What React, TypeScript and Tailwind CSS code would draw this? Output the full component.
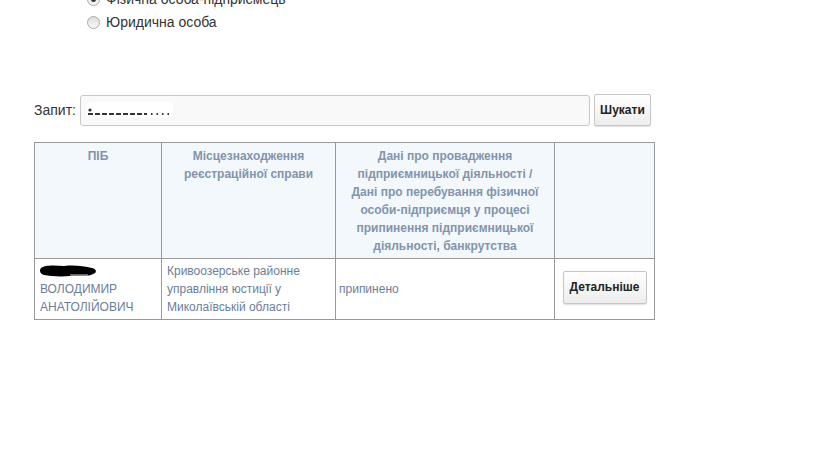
import React from 'react';

const Radio: React.FC<{ checked?: boolean; label: string }> = ({ checked, label }) => (
  <label className="flex h-[23px] items-center gap-[6px]">
    <span className="flex h-[13px] w-[13px] items-center justify-center rounded-full border border-[#a9a9a9] bg-gradient-to-b from-[#dcdcdc] to-[#fafafa]">
      {checked && <span className="h-[5px] w-[5px] rounded-full bg-[#333]" />}
    </span>
    <span className="text-[14px] text-[#333]">{label}</span>
  </label>
);

const headers: React.ReactNode[] = [
  'ПІБ',
  <>
    Місцезнаходження
    <br />
    реєстраційної справи
  </>,
  <>
    Дані про провадження
    <br />
    підприємницької діяльності /
    <br />
    Дані про перебування фізичної
    <br />
    особи-підприємця у процесі
    <br />
    припинення підприємницької
    <br />
    діяльності, банкрутства
  </>,
  '',
];

export default function App() {
  return (
    <div className="h-[460px] w-[816px] overflow-hidden bg-white font-['Liberation_Sans',Arial,sans-serif]">
      <div className="-mt-[12px] pl-[87px]">
        <Radio checked label="Фізична особа-підприємець" />
        <Radio label="Юридична особа" />
      </div>

      <div className="mt-[60px] flex items-center pl-[34px]">
        <span className="mr-[4px] text-[14px] text-[#333]">Запит:</span>
        <div className="flex h-[31px] w-[510px] items-center rounded-[3px] border border-[#c8c8c8] bg-[#f9f9f9] pl-[6px]">
          {/* redacted query value */}
          <svg width="86" height="16" viewBox="0 0 86 16">
            <rect x="0" y="0" width="86" height="16" rx="3" fill="#fff" />
            <circle cx="3" cy="8" r="1.6" fill="#333" />
            <path d="M1 12 H60" stroke="#333" strokeWidth="2" strokeDasharray="5 2" />
            <path d="M64 12 H84" stroke="#333" strokeWidth="2" strokeDasharray="1.5 4" />
          </svg>
        </div>
        <button className="ml-[4px] h-[32px] w-[57px] rounded-[2px] border border-[#c6c6c6] bg-gradient-to-b from-white to-[#ededed] text-[12px] font-bold text-[#222] shadow-[0_1px_1px_rgba(0,0,0,0.12)]">
          Шукати
        </button>
      </div>

      <table className="ml-[34px] mt-[16px] w-[620px] table-fixed border-collapse text-[12px] leading-[18px]">
        <colgroup>
          <col className="w-[127px]" />
          <col className="w-[174px]" />
          <col className="w-[219px]" />
          <col className="w-[100px]" />
        </colgroup>
        <thead>
          <tr className="bg-[#f3f8fd]">
            {headers.map((h, i) => (
              <th
                key={i}
                className="border border-[#999] px-[4px] pb-[3px] pt-[4px] text-center align-top font-bold text-[#8294aa]"
              >
                {h}
              </th>
            ))}
          </tr>
        </thead>
        <tbody>
          <tr className="text-[#6c7d99]">
            <td className="border border-[#999] px-[5px] pb-[3px] pt-[3px] align-middle">
              <svg width="58" height="14" viewBox="0 0 58 14" className="block h-[18px] py-[2px]">
                <path
                  d="M1 4 C4 1 14 1 24 2 C34 1 44 2 52 4 C57 5 57 9 53 10 C48 13 40 11 30 12 C20 13 10 12 4 11 C0 10 -1 6 1 4 Z"
                  fill="#000"
                />
                <path d="M30 11 H48" stroke="#fff" strokeWidth="0.8" />
              </svg>
              <div>ВОЛОДИМИР</div>
              <div>АНАТОЛІЙОВИЧ</div>
            </td>
            <td className="border border-[#999] px-[5px] pb-[3px] pt-[3px] align-middle">
              Кривоозерське районне управління юстиції у Миколаївській області
            </td>
            <td className="border border-[#999] px-[3px] py-[3px] align-middle">припинено</td>
            <td className="border border-[#999] px-[5px] pb-[5px] pt-[1px] text-center align-middle">
              <button className="h-[33px] w-[84px] rounded-[2px] border border-[#c6c6c6] bg-gradient-to-b from-white to-[#ededed] text-[12px] font-bold text-[#222] shadow-[0_1px_1px_rgba(0,0,0,0.12)]">
                Детальніше
              </button>
            </td>
          </tr>
        </tbody>
      </table>
    </div>
  );
}
